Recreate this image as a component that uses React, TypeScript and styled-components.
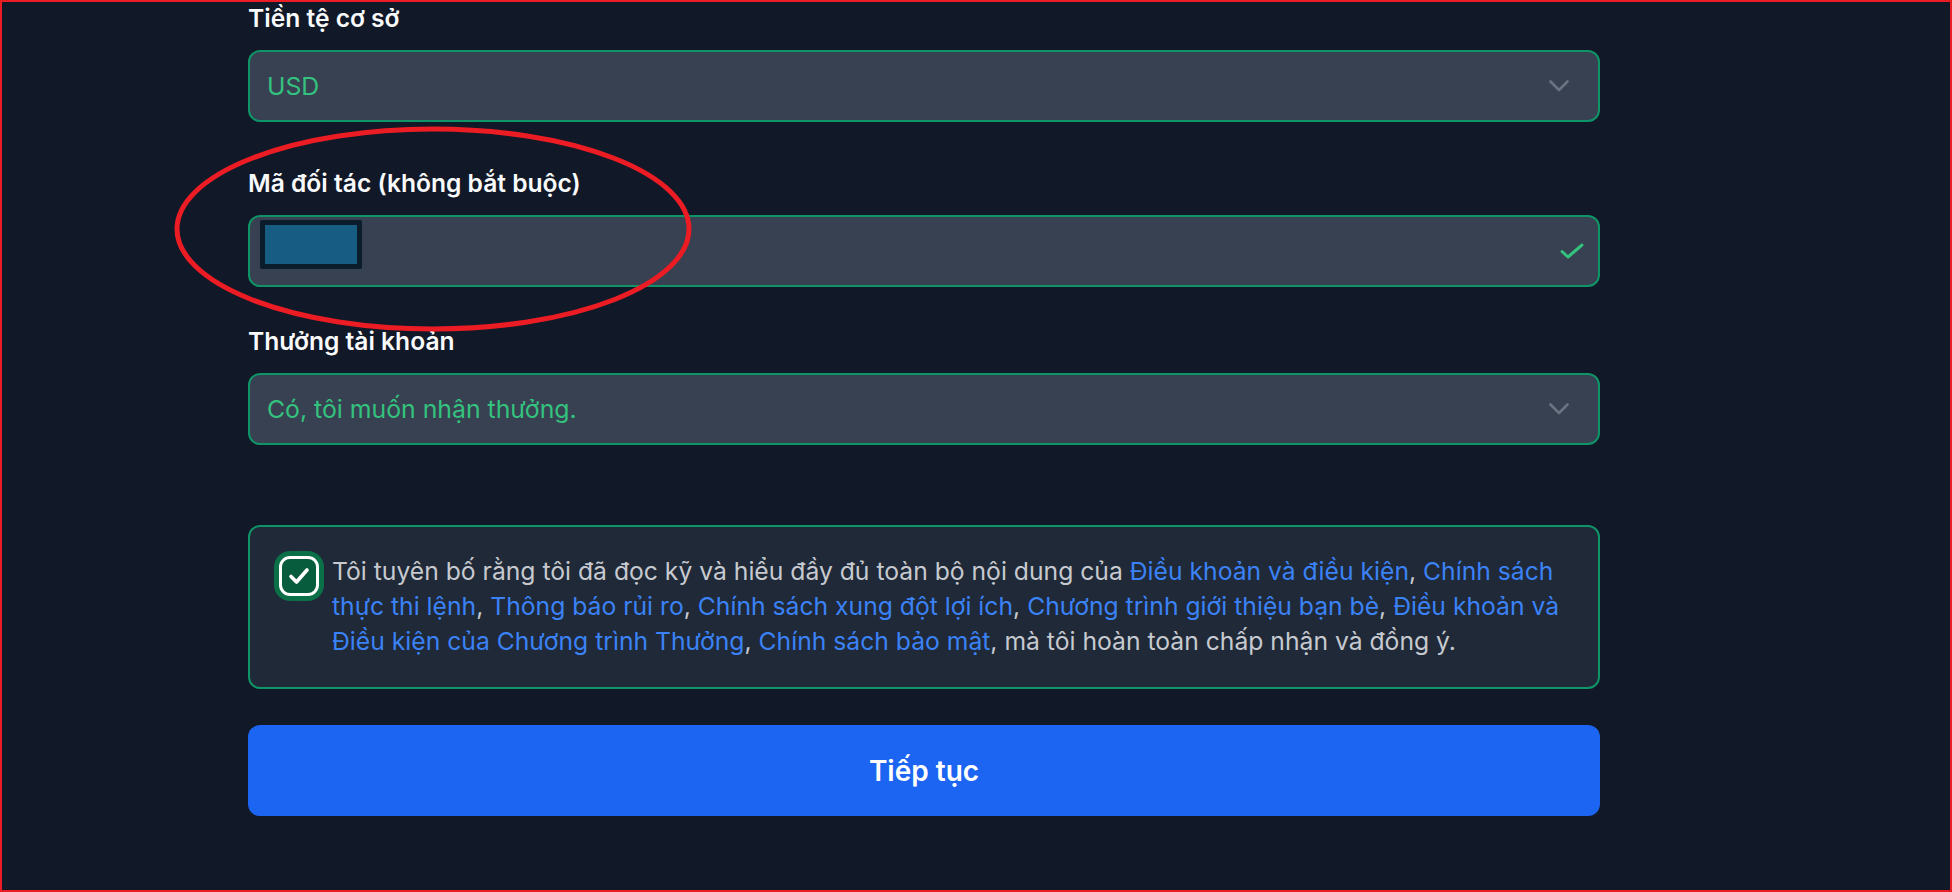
import styled, { createGlobalStyle } from "styled-components";

const GlobalStyle = createGlobalStyle`
  html, body {
    margin: 0;
    padding: 0;
    background: #111827;
    font-family: Inter, "Noto Sans", "Liberation Sans", sans-serif;
  }
  * {
    box-sizing: border-box;
  }
`;

const Page = styled.div`
  position: relative;
  height: 892px;
  overflow: hidden;
  padding-left: 248px;
  background: #111827;
`;

const Form = styled.form`
  width: 1352px;
  display: flex;
  flex-direction: column;
`;

const FieldGroup = styled.div<{ $gap: number }>`
  display: flex;
  flex-direction: column;
  margin-bottom: ${({ $gap }) => $gap}px;
`;

const Label = styled.label`
  font-size: 24.6px;
  line-height: 36px;
  font-weight: 600;
  color: #f9fafb;
  margin-bottom: 14px;
`;

const InputBox = styled.div`
  position: relative;
  height: 72px;
  display: flex;
  align-items: center;
  padding: 0 29px 0 17px;
  background: #374151;
  border: 2px solid #0f9468;
  border-radius: 12px;
`;

const Value = styled.span`
  flex: 1;
  font-size: 24.8px;
  color: #34c27f;
`;

const Redacted = styled.div`
  align-self: flex-start;
  margin: 3px 0 0 -7px;
  width: 102px;
  height: 49px;
  background: #175c82;
  border: 5px solid #0b1c2a;
  border-radius: 2px;
`;

const Chevron = () => (
  <svg width="20" height="12" viewBox="0 0 20 12" fill="none">
    <polyline
      points="1.5,1.5 10,10 18.5,1.5"
      stroke="#6b7280"
      strokeWidth="2.6"
      strokeLinecap="round"
      strokeLinejoin="round"
    />
  </svg>
);

const ValidMark = styled.svg`
  margin-left: auto;
  margin-right: -15px;
`;

const Consent = styled.div`
  display: flex;
  align-items: flex-start;
  gap: 13px;
  margin-bottom: 36px;
  padding: 27px 30px 28px 29px;
  background: #1f2937;
  border: 2px solid #0f9468;
  border-radius: 12px;
`;

const CheckBox = styled.span`
  flex: none;
  width: 40px;
  height: 40px;
  margin-top: 2px;
  display: flex;
  align-items: center;
  justify-content: center;
  background: #075c3e;
  border: 3px solid #ffffff;
  border-radius: 11px;
  box-shadow: 0 0 0 5px #0b6f48;
`;

const ConsentText = styled.p`
  margin: 0;
  font-size: 24.7px;
  line-height: 35px;
  color: #c6cad0;
`;

const Link = styled.a`
  color: #3b82f6;
  text-decoration: none;
  cursor: pointer;
`;

const SubmitButton = styled.button`
  height: 91px;
  border: none;
  border-radius: 12px;
  background: #1c64f2;
  color: #ffffff;
  font-family: inherit;
  font-size: 28px;
  font-weight: 600;
  cursor: pointer;
`;

const Annotation = styled.svg`
  position: absolute;
  inset: 0;
  pointer-events: none;
`;

const links = [
  "Điều khoản và điều kiện",
  "Chính sách thực thi lệnh",
  "Thông báo rủi ro",
  "Chính sách xung đột lợi ích",
  "Chương trình giới thiệu bạn bè",
  "Điều khoản và Điều kiện của Chương trình Thưởng",
  "Chính sách bảo mật",
];

export default function App() {
  return (
    <>
      <GlobalStyle />
      <Page>
        <Form onSubmit={(e) => e.preventDefault()}>
          <FieldGroup $gap={43}>
            <Label>Tiền tệ cơ sở</Label>
            <InputBox>
              <Value>USD</Value>
              <Chevron />
            </InputBox>
          </FieldGroup>

          <FieldGroup $gap={36}>
            <Label>Mã đối tác (không bắt buộc)</Label>
            <InputBox>
              <Redacted />
              <ValidMark width="24" height="16" viewBox="0 0 24 16" fill="none">
                <polyline
                  points="2,8.5 8,14 22,2"
                  stroke="#34c27f"
                  strokeWidth="3"
                  strokeLinecap="round"
                  strokeLinejoin="round"
                />
              </ValidMark>
            </InputBox>
          </FieldGroup>

          <FieldGroup $gap={80}>
            <Label>Thưởng tài khoản</Label>
            <InputBox>
              <Value>Có, tôi muốn nhận thưởng.</Value>
              <Chevron />
            </InputBox>
          </FieldGroup>

          <Consent>
            <CheckBox>
              <svg width="22" height="18" viewBox="0 0 22 18" fill="none">
                <polyline
                  points="3,9.5 8.5,15 19,3"
                  stroke="#ffffff"
                  strokeWidth="3.6"
                  strokeLinecap="round"
                  strokeLinejoin="round"
                />
              </svg>
            </CheckBox>
            <ConsentText>
              Tôi tuyên bố rằng tôi đã đọc kỹ và hiểu đầy đủ toàn bộ nội dung của{" "}
              {links.map((l, i) => (
                <span key={l}>
                  <Link>{l}</Link>
                  {i < links.length - 1 ? ", " : ""}
                </span>
              ))}
              , mà tôi hoàn toàn chấp nhận và đồng ý.
            </ConsentText>
          </Consent>

          <SubmitButton type="submit">Tiếp tục</SubmitButton>
        </Form>

        <Annotation width="1952" height="892" viewBox="0 0 1952 892">
          <ellipse
            cx="433"
            cy="229"
            rx="256"
            ry="100"
            fill="none"
            stroke="#ec1c24"
            strokeWidth="5"
          />
          <rect
            x="1"
            y="1"
            width="1950"
            height="890"
            fill="none"
            stroke="#ec1c24"
            strokeWidth="2"
          />
        </Annotation>
      </Page>
    </>
  );
}
